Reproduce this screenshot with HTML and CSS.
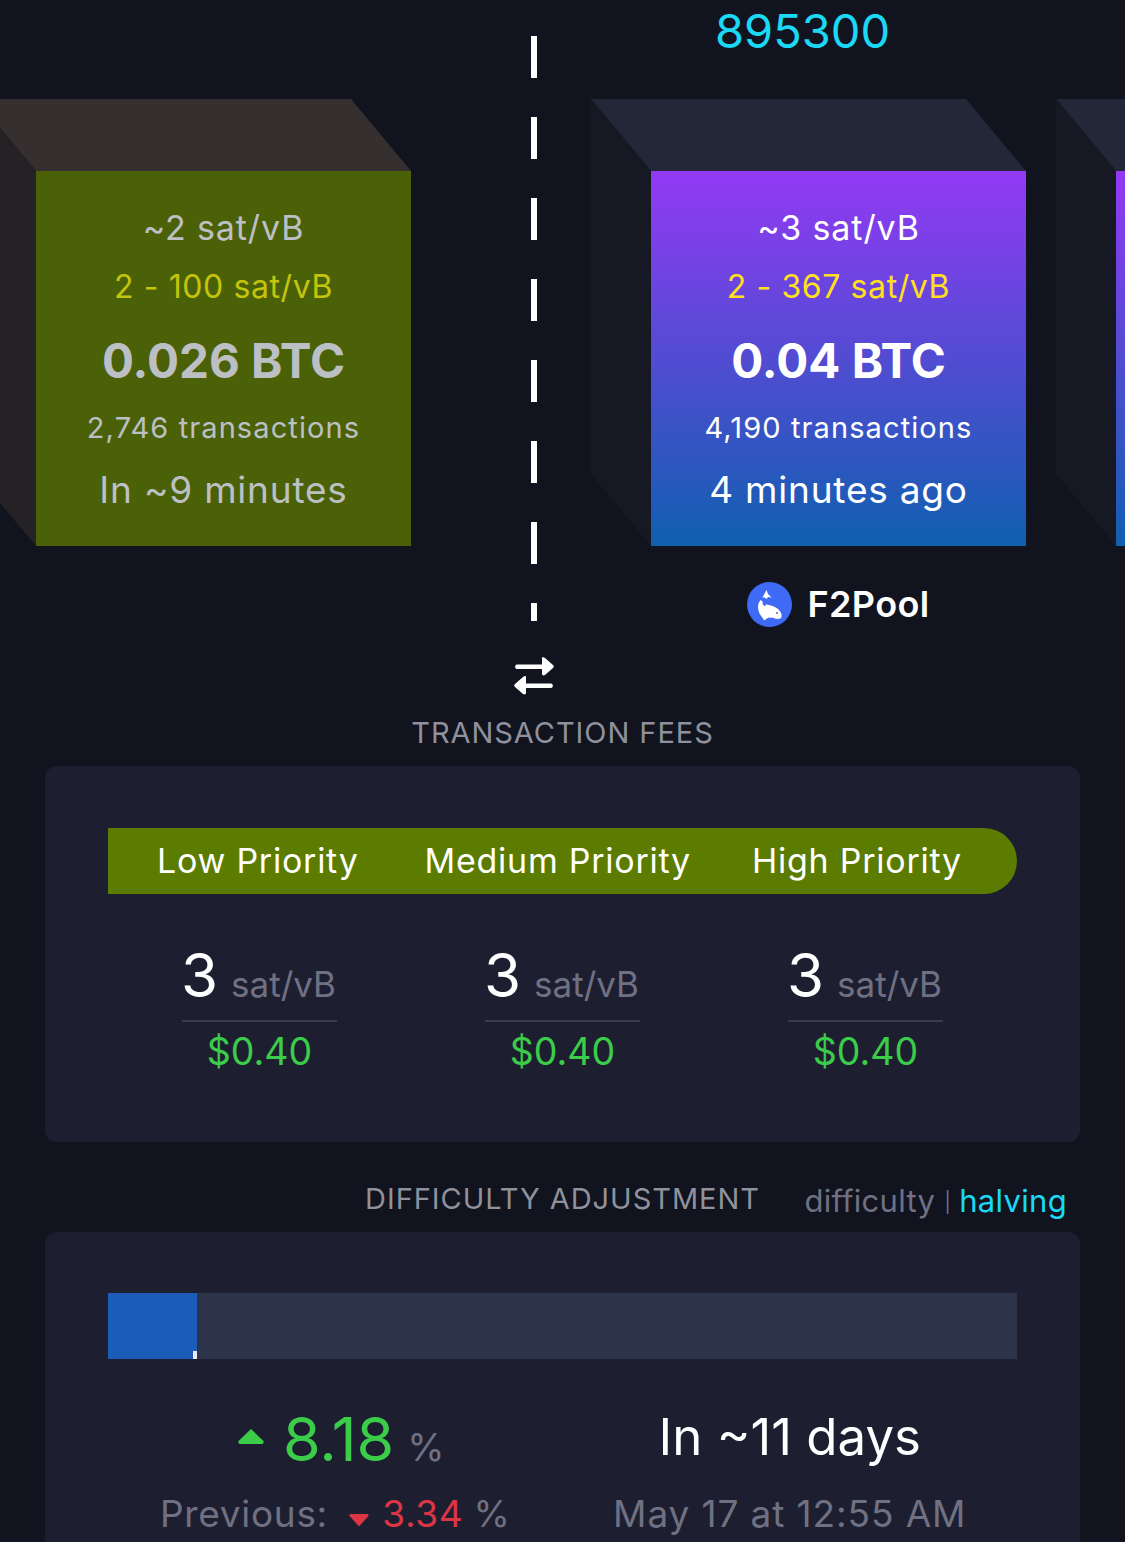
FILE: index.html
```html
<!DOCTYPE html>
<html lang="en">
<head>
    <meta charset="UTF-8">
    <meta name="viewport" content="width=device-width, initial-scale=1.0">
    <title>Mempool</title>
    <link rel="stylesheet" href="styles.css">
</head>
<body>
    <div class="chain">
        <div class="block-col first">
            <div class="block-number"></div>
            <div class="cube cube-pending">
                <div class="fee">~2 sat/vB</div>
                <div class="fee-range">2 - 100 sat/vB</div>
                <div class="total">0.026 BTC</div>
                <div class="tx-count">2,746 transactions</div>
                <div class="time">In ~9 minutes</div>
            </div>
        </div>

        <div class="divider"></div>

        <div class="block-col">
            <div class="block-number">895300</div>
            <div class="cube cube-mined">
                <div class="fee">~3 sat/vB</div>
                <div class="fee-range">2 - 367 sat/vB</div>
                <div class="total">0.04 BTC</div>
                <div class="tx-count">4,190 transactions</div>
                <div class="time">4 minutes ago</div>
            </div>
            <div class="miner">
                <svg class="miner-logo" viewBox="0 0 45 45">
                    <circle cx="22.5" cy="22.5" r="22.5" fill="#3f6af5"/>
                    <path fill="#fff" d="M19.500 8 L21 12 L24.500 15.500 L21 15 L19.500 17 L17.500 15.500 L15.500 15.500 Z"/>
                    <path fill="#fff" d="M13.500 18 L16 20 L15.500 22 L18 24.500 C18.500 22 20 22.500 22 23 C27 24 31.500 26.500 33.500 30 C35 32.500 35 35 33.500 36.500 C31 37 29 37.500 27 36 C25 35.500 23 36 21.500 35.500 L17 38.500 L16 36.500 C13 33 11 29.500 11 25 C11 22 12 20 13.500 18 Z"/>
                    <circle cx="30" cy="31" r="1" fill="#3f6af5"/>
                </svg>
                <span class="miner-name">F2Pool</span>
            </div>
        </div>

        <div class="block-col last">
            <div class="block-number"></div>
            <div class="cube cube-mined"></div>
        </div>
    </div>

    <svg class="swap-icon" viewBox="0 0 40 38">
        <path fill="#fff" d="M28 0.500 C29 0 30 0.300 31 1 L39 8 C40 9 40 10 39 11 L31 18 C29.500 19 28 18.500 28 16.500 L28 12 L3 12 C0.500 12 0.500 7.500 3 7.500 L28 7.500 Z"/>
        <path fill="#fff" d="M12 19.500 C12 19 11 18.700 9 20 L1 27 C0 28 0 29 1 30 L9 37 C10.500 38 12 37.500 12 35.500 L12 31 L37 31 C39.500 31 39.500 26.500 37 26.500 L12 26.500 Z"/>
    </svg>

    <h2 class="section-title">TRANSACTION FEES</h2>
    <div class="card fees-card">
        <div class="priority-bar">
            <span class="priority-low">Low Priority</span>
            <span class="priority-medium">Medium Priority</span>
            <span class="priority-high">High Priority</span>
        </div>
        <div class="fee-cols">
            <div class="fee-col">
                <div class="fee-rate"><span class="rate-num">3</span><span class="rate-unit">sat/vB</span></div>
                <div class="fee-usd">$0.40</div>
            </div>
            <div class="fee-col">
                <div class="fee-rate"><span class="rate-num">3</span><span class="rate-unit">sat/vB</span></div>
                <div class="fee-usd">$0.40</div>
            </div>
            <div class="fee-col">
                <div class="fee-rate"><span class="rate-num">3</span><span class="rate-unit">sat/vB</span></div>
                <div class="fee-usd">$0.40</div>
            </div>
        </div>
    </div>

    <div class="difficulty-head">
        <span></span>
        <h2 class="section-title">DIFFICULTY ADJUSTMENT</h2>
        <div class="tabs"><span class="tab-off">difficulty</span><span class="tab-sep">|</span><span class="tab-on">halving</span></div>
    </div>
    <div class="card difficulty-card">
        <div class="progress">
            <div class="progress-fill" style="width: 89px"><span class="progress-mark"></span></div>
        </div>
        <div class="stats">
            <div class="stat stat-left">
                <div class="stat-main">
                    <svg class="tri-up" viewBox="0 0 26 16"><path fill="#3bcc49" d="M13 0 L25.500 12 Q26 15 24 15 L2 15 Q0 15 0.500 12 Z"/></svg>
                    <span class="stat-big green">8.18</span>
                    <span class="stat-pct">%</span>
                </div>
                <div class="stat-sub">
                    Previous:
                    <svg class="tri-down" viewBox="0 0 20 13"><path fill="#dc3545" d="M1.500 0 L18.500 0 Q20.500 0.500 19 2.500 L10 12.500 L1 2.500 Q-0.500 0.500 1.500 0 Z"/></svg>
                    <span class="red">3.34</span>
                    <span class="stat-pct-small">%</span>
                </div>
            </div>
            <div class="stat">
                <div class="stat-main stat-days">In ~11 days</div>
                <div class="stat-sub">May 17 at 12:55 AM</div>
            </div>
        </div>
    </div>
</body>
</html>
```

FILE: styles.css
```css
html, body {
    height: 1542px;
}

body {
    margin: 0;
    background-color: #11131f;
    color: #fff;
    font-family: Inter, "Liberation Sans", sans-serif;
    overflow: hidden;
}

.chain {
    display: flex;
    align-items: flex-start;
    height: 657px;
}

.block-col {
    flex: 0 0 375px;
    display: flex;
    flex-direction: column;
    align-items: center;
}

.block-col.first {
    margin-left: 36px;
}

.block-col.last {
    margin-left: 90px;
}

.block-number {
    height: 171px;
    padding-right: 72px;
    font-size: 47px;
    line-height: 62px;
    color: #1bd8f4;
}

.cube {
    position: relative;
    box-sizing: border-box;
    width: 375px;
    height: 375px;
    text-align: center;
}

.cube::before, .cube::after {
    content: "";
    position: absolute;
}

/* top face */
.cube::before {
    left: -60px;
    top: -72px;
    width: 435px;
    height: 72px;
    clip-path: polygon(0 0, 375px 0, 100% 100%, 60px 100%);
}

/* left face */
.cube::after {
    left: -60px;
    top: -72px;
    width: 60px;
    height: 447px;
    clip-path: polygon(0 0, 100% 72px, 100% 100%, 0 375px);
}

.cube-mined {
    background: linear-gradient(#9339f4, #105fb0);
}

.cube-mined::before {
    background-color: #232838;
}

.cube-mined::after {
    background-color: #161923;
}

.cube-pending {
    background-color: #4b6108;
    color: #bcc0c4;
}

.cube-pending::before {
    background-color: #352f30;
}

.cube-pending::after {
    background-color: #252226;
}

.fee {
    padding-top: 36px;
    font-size: 34px;
    line-height: 42px;
    letter-spacing: 0.9px;
}

.fee-range {
    margin-top: 17px;
    font-size: 32px;
    line-height: 42px;
    letter-spacing: 0.6px;
    color: #ffe01b;
}

.cube-pending .fee-range {
    color: #c4c40c;
}

.total {
    margin-top: 25px;
    font-size: 47.5px;
    font-weight: 700;
    line-height: 56px;
}

.tx-count {
    margin-top: 19px;
    font-size: 29px;
    line-height: 40px;
    letter-spacing: 1.1px;
}

.time {
    margin-top: 20px;
    font-size: 37px;
    line-height: 44px;
    letter-spacing: 0.8px;
}

.miner {
    display: flex;
    align-items: center;
    gap: 15px;
    margin-top: 36px;
}

.miner-logo {
    width: 45px;
    height: 45px;
}

.miner-name {
    font-size: 36px;
    font-weight: 600;
    line-height: 45px;
    letter-spacing: 0.4px;
}

.divider {
    flex: 0 0 6px;
    height: 585px;
    margin: 36px 114px 0 120px;
    background: repeating-linear-gradient(#fff 0, #fff 42px, transparent 42px, transparent 81px);
}

.swap-icon {
    display: block;
    width: 40px;
    height: 38px;
    margin-left: 514px;
}

.section-title {
    margin: 0;
    font-size: 29px;
    font-weight: 400;
    line-height: 36px;
    letter-spacing: 0.95px;
    color: #8f919c;
    text-align: center;
}

.swap-icon + .section-title {
    margin-top: 20px;
}

.card {
    box-sizing: border-box;
    width: 1035px;
    margin-left: 45px;
    padding: 62px 63px 0;
    background-color: #1d1f31;
    border-radius: 12px;
}

.fees-card {
    height: 376px;
    margin-top: 15px;
}

.priority-bar {
    display: flex;
    align-items: center;
    height: 66px;
    padding: 0 0 2px 49px;
    box-sizing: border-box;
    background-color: #5b7c00;
    border-radius: 0 33px 33px 0;
    font-size: 34px;
    letter-spacing: 0.75px;
}

.priority-medium {
    margin-left: 66px;
}

.priority-high {
    margin-left: 61px;
}

.fee-cols {
    display: grid;
    grid-template-columns: repeat(3, 303px);
    margin-top: 45px;
}

.fee-col {
    display: flex;
    flex-direction: column;
    align-items: center;
}

.fee-rate {
    box-sizing: border-box;
    display: flex;
    align-items: baseline;
    gap: 13px;
    width: 155px;
    justify-content: center;
    height: 83px;
    padding-right: 2px;
    border-bottom: 2px solid #393b4c;
}

.rate-num {
    font-size: 60px;
    line-height: 72px;
}

.rate-unit {
    font-size: 35px;
    color: #6f7183;
}

.fee-usd {
    margin-top: 6px;
    font-size: 37.5px;
    line-height: 48px;
    color: #3bcc49;
}

.difficulty-head {
    box-sizing: border-box;
    display: grid;
    grid-template-columns: 1fr auto 1fr;
    align-items: center;
    height: 90px;
    padding-top: 24px;
}

.tabs {
    display: flex;
    justify-content: flex-end;
    align-items: center;
    padding: 4px 58px 0 0;
    font-size: 31px;
    line-height: 38px;
    letter-spacing: 0.3px;
    white-space: nowrap;
}

.tab-off {
    color: #6f7183;
}

.tab-sep {
    margin: 2px 8px 0 9px;
    font-size: 20px;
    color: #6f7183;
}

.tab-on {
    color: #1bd8f4;
}

.difficulty-card {
    height: 310px;
    padding-top: 61px;
    border-radius: 12px 12px 0 0;
}

.progress {
    height: 66px;
    background-color: #2d3348;
}

.progress-fill {
    position: relative;
    height: 100%;
    background-color: #1a5cb8;
}

.progress-mark {
    position: absolute;
    right: 0;
    bottom: 0;
    width: 4px;
    height: 8px;
    background-color: #e9ecf5;
}

.stats {
    display: grid;
    grid-template-columns: 1fr 1fr;
    margin-top: 44px;
    text-align: center;
}

.stat-main {
    display: flex;
    justify-content: center;
    align-items: baseline;
    height: 72px;
    line-height: 72px;
}

.stat-left .stat-main {
    padding-left: 12px;
}

.stat-big {
    margin: 0 13px 0 19px;
    font-size: 61px;
}

.stat-pct {
    font-size: 38px;
    color: #6f7183;
}

.stat-days {
    font-size: 51px;
    line-height: 68px;
}

.tri-up {
    align-self: center;
    width: 26px;
    height: 16px;
    margin-bottom: 4px;
}

.stat-sub {
    margin-top: 16px;
    font-size: 37px;
    line-height: 46px;
    letter-spacing: 0.9px;
    color: #6f7183;
}

.stat-left .stat-sub {
    letter-spacing: 0.7px;
}

.tri-down {
    width: 20px;
    height: 13px;
    margin: 0 2px 0 10px;
}

.green {
    color: #3bcc49;
}

.red {
    color: #dc3545;
}

.stat-pct-small {
    margin-left: -1px;
}
```
